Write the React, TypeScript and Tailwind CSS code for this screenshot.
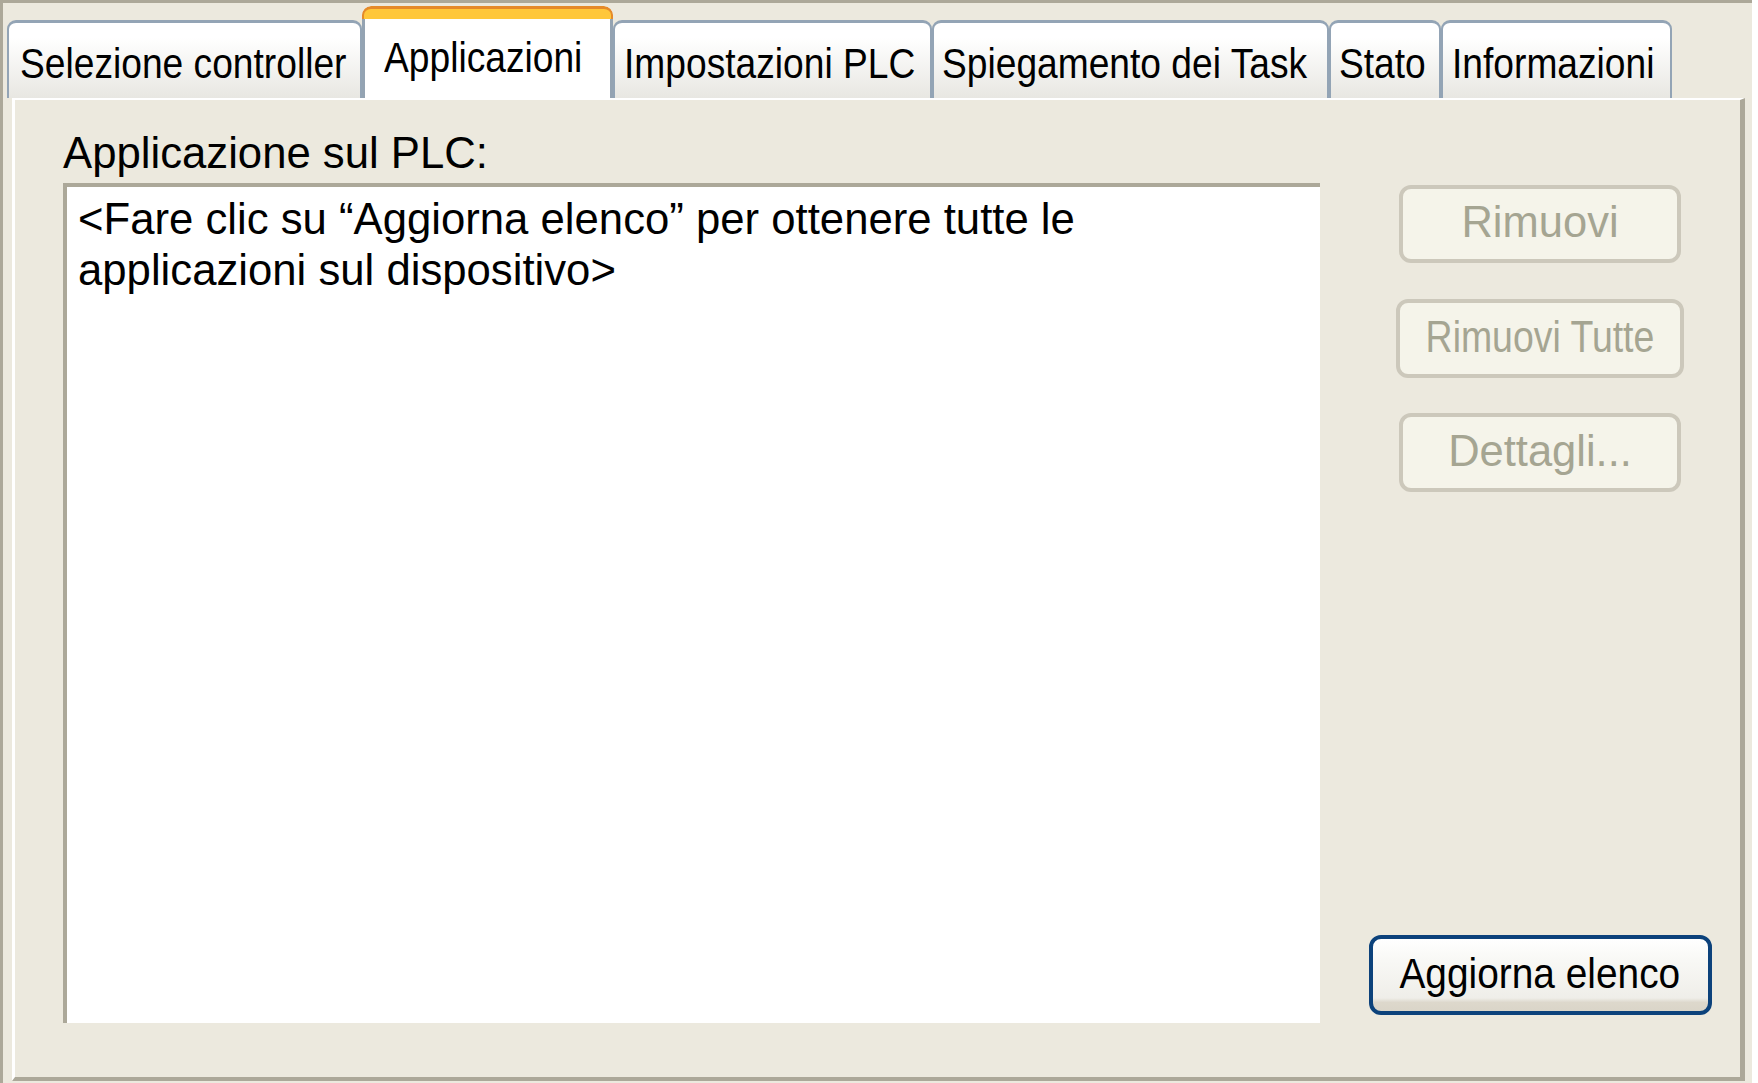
const tabs = [
  { label: "Selezione controller", w: "w-[355px]", pl: "pl-[11px]" },
  { label: "Applicazioni", w: "w-[251px]", pl: "pl-[19px]", active: true },
  { label: "Impostazioni PLC", w: "w-[319px]", pl: "pl-[9px]" },
  { label: "Spiegamento dei Task", w: "w-[397px]", pl: "pl-[8px]" },
  { label: "Stato", w: "w-[112px]", pl: "pl-[8px]" },
  { label: "Informazioni", w: "w-[231px]", pl: "pl-[9px]" },
];

function Tab({ label, w, pl, active }: { label: string; w: string; pl: string; active?: boolean }) {
  if (active) {
    return (
      <div className={`${w} h-[92px] flex flex-col rounded-t-[9px] overflow-hidden`}>
        <div className="h-[13px] shrink-0 bg-[#ffc73a] border-t-[3px] border-x-[2px] border-[#e58a2a] rounded-t-[9px]" />
        <div className={`flex-1 bg-white border-x-[3px] border-[#94a3b2] ${pl} pt-[15px]`}>
          <span className="inline-block origin-left scale-x-[0.885] whitespace-nowrap text-[42px] leading-[48px] text-black">
            {label}
          </span>
        </div>
      </div>
    );
  }
  return (
    <div
      className={`${w} h-[78px] rounded-t-[9px] border-t-[3px] border-x-[2px] border-[#93a4b5] bg-linear-to-b from-white from-20% to-[#e8e7e2] ${pl} pt-[17px]`}
    >
      <span className="inline-block origin-left scale-x-[0.885] whitespace-nowrap text-[42px] leading-[48px] text-black">
        {label}
      </span>
    </div>
  );
}

function DisabledButton({ label, w, h, scale }: { label: string; w: string; h: string; scale?: string }) {
  return (
    <div
      className={`${w} ${h} flex items-center justify-center pb-[4px] rounded-[12px] border-[4px] border-[#ccc8bb] bg-[#f5f4ea]`}
    >
      <span className={`inline-block whitespace-nowrap text-[43.5px] leading-[48px] text-[#a5a592] ${scale ?? ""}`}>
        {label}
      </span>
    </div>
  );
}

export default function App() {
  return (
    <div className="w-[1758px] h-[1083px] bg-white overflow-hidden font-['Liberation_Sans',Arial,sans-serif]">
      <div className="w-[1752px] h-[1083px] bg-[#ece9de] border-t-[3px] border-l-[3px] border-[#aca899] flex flex-col">
        {/* tab strip */}
        <div className="h-[95px] shrink-0 flex items-end pl-[4px]">
          {tabs.map((t) => (
            <Tab key={t.label} {...t} />
          ))}
        </div>

        {/* tab page */}
        <div className="ml-[9px] w-[1733px] h-[983px] flex border-t-[2px] border-l-[3px] border-white border-r-[5px] border-b-[4px] border-r-[#aca899] border-b-[#aca899]">
          <div className="flex flex-col pl-[48px] pt-[28px]">
            <div className="text-[43.7px] leading-[50px] text-black whitespace-nowrap">Applicazione sul PLC:</div>
            <div className="mt-[5px] w-[1257px] h-[840px] bg-white border-t-[4px] border-l-[4px] border-[#aca899] pl-[11px] pt-[6px]">
              <p className="text-[43.7px] leading-[51px] text-black whitespace-nowrap">
                &lt;Fare clic su “Aggiorna elenco” per ottenere tutte le
                <br />
                applicazioni sul dispositivo&gt;
              </p>
            </div>
          </div>

          <div className="ml-[20px] w-[400px] flex flex-col items-center pt-[85px] pb-[62px]">
            <DisabledButton label="Rimuovi" w="w-[282px]" h="h-[78px]" />
            <div className="mt-[36px]">
              <DisabledButton label="Rimuovi Tutte" w="w-[288px]" h="h-[79px]" scale="scale-x-[0.86]" />
            </div>
            <div className="mt-[35px]">
              <DisabledButton label="Dettagli..." w="w-[282px]" h="h-[79px]" />
            </div>
            <button
              type="button"
              className="mt-auto w-[343px] h-[80px] flex items-center justify-center pb-[2px] rounded-[12px] border-[4px] border-[#0c427b] bg-[linear-gradient(to_bottom,#ffffff_0%,#f8f8f5_30%,#efeee9_82%,#ddd8cc_88%,#dad5c8_100%)]"
            >
              <span className="inline-block whitespace-nowrap scale-x-[0.925] text-[42px] leading-[48px] text-black">
                Aggiorna elenco
              </span>
            </button>
          </div>
        </div>
      </div>
    </div>
  );
}
